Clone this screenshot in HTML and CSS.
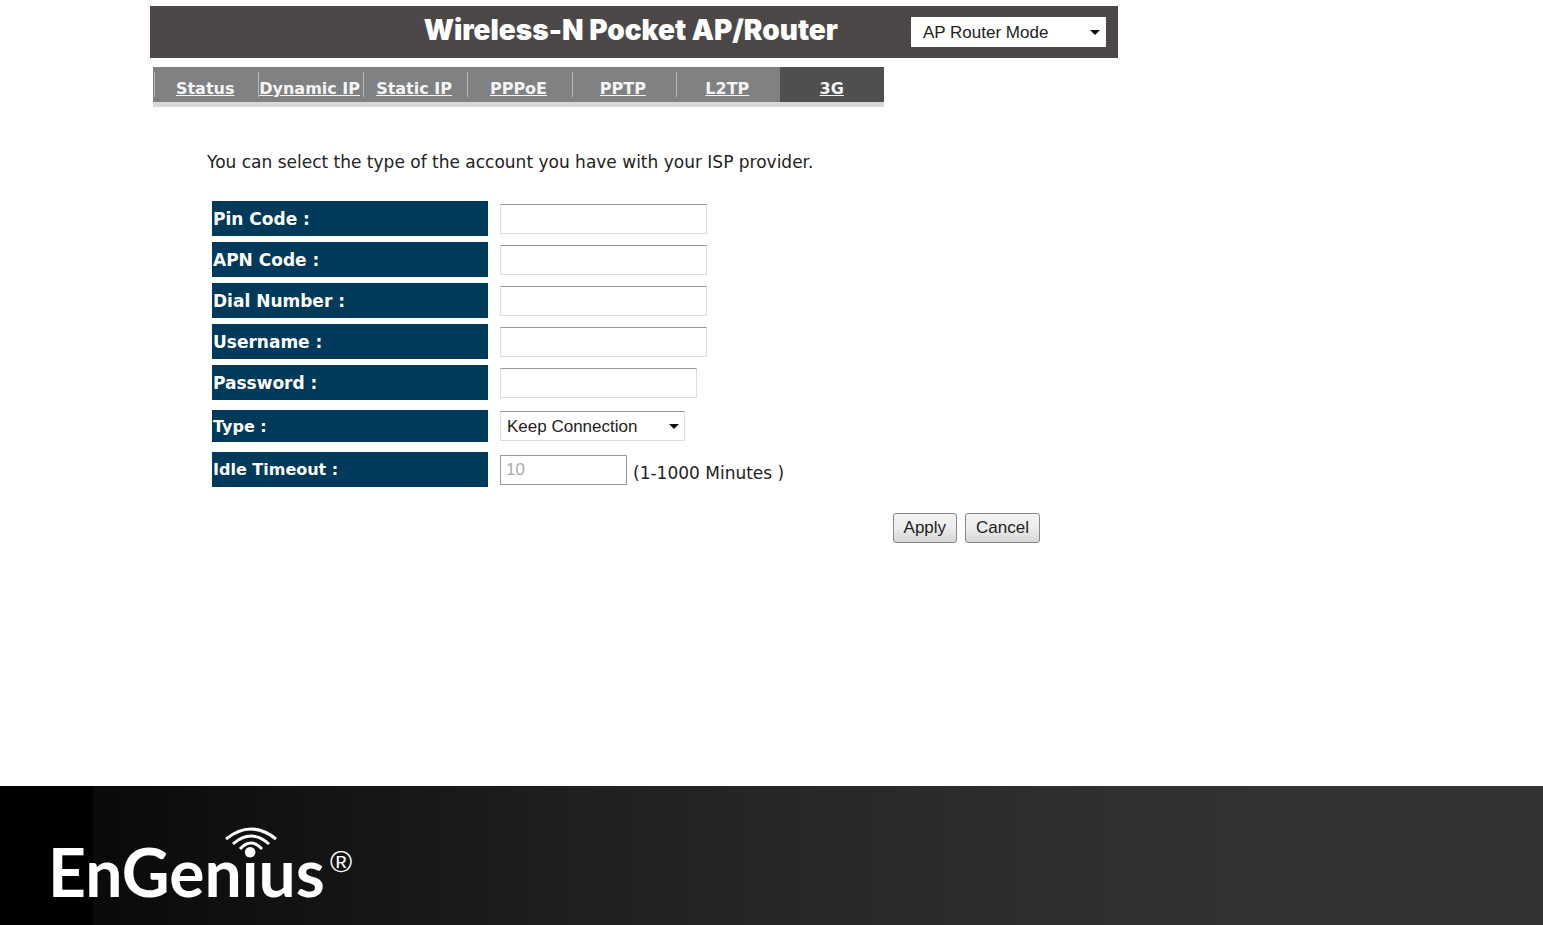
FILE: index.html
```
<!DOCTYPE html>
<html lang="en">

<head>
    <meta charset="UTF-8">
    <meta name="viewport" content="width=device-width, initial-scale=1.0">
    <title>Wireless-N Pocket AP/Router</title>
    <link rel="stylesheet" href="styles.css">
</head>

<body>
    <div class="container">
        <header class="header">
            <h1>Wireless-N Pocket AP/Router</h1>
            <div class="select mode">
                <select id="mode" aria-label="Operation mode">
                    <option>AP Router Mode</option>
                </select>
            </div>
        </header>

        <nav class="tabs">
            <a href="#status">Status</a>
            <a href="#dynamic">Dynamic IP</a>
            <a href="#static">Static IP</a>
            <a href="#pppoe">PPPoE</a>
            <a href="#pptp">PPTP</a>
            <a href="#l2tp">L2TP</a>
            <a href="#3g" class="active">3G</a>
        </nav>

        <form class="wan-form">
            <p>You can select the type of the account you have with your ISP provider.</p>

            <div class="row">
                <label for="pin">Pin Code :</label>
                <input type="text" id="pin">
            </div>
            <div class="row">
                <label for="apn">APN Code :</label>
                <input type="text" id="apn">
            </div>
            <div class="row">
                <label for="dial">Dial Number :</label>
                <input type="text" id="dial">
            </div>
            <div class="row">
                <label for="username">Username :</label>
                <input type="text" id="username">
            </div>
            <div class="row">
                <label for="password">Password :</label>
                <input type="password" id="password">
            </div>
            <div class="row spaced short">
                <label for="type">Type :</label>
                <div class="select type">
                    <select id="type">
                        <option>Keep Connection</option>
                    </select>
                </div>
            </div>
            <div class="row spaced">
                <label for="idle">Idle Timeout :</label>
                <input type="text" id="idle" class="idle" value="10" disabled>
                <span class="hint">(1-1000 Minutes )</span>
            </div>

            <div class="buttons">
                <button type="submit">Apply</button>
                <button type="reset">Cancel</button>
            </div>
        </form>
    </div>

    <footer class="footer">
        <svg class="logo" width="320" height="92" viewBox="0 0 320 92" role="img" aria-label="EnGenius">
            <text class="logo-name" x="0" y="70">EnGenius</text>
            <!-- wifi waves above the i -->
            <g fill="none" stroke="#fff" stroke-width="3">
                <path d="M178 12 Q203 -8 228 12" />
                <path d="M185 17 Q203 1 221 17" />
                <path d="M192 22 Q203 10 214 22" />
            </g>
            <text class="logo-mark" x="282" y="45">®</text>
        </svg>
    </footer>
</body>

</html>
```
FILE: styles.css
```
* {
    box-sizing: border-box;
}

body {
    font-family: "DejaVu Sans", Verdana, sans-serif;
    font-size: 17px;
    margin: 0;
    min-height: 100vh;
    display: flex;
    flex-direction: column;
    background-color: #fff;
    color: #222;
}

.container {
    width: 100%;
    max-width: 1118px;
    padding: 6px 0 40px 150px;
    flex: 1;
}

.header {
    display: flex;
    align-items: center;
    justify-content: flex-end;
    gap: 73px;
    height: 52px;
    padding-right: 12px;
    background-color: #4c4848;
}

.header h1 {
    margin: 0 0 4px;
    font-family: Inter, "Arial Black", sans-serif;
    font-size: 28px;
    font-weight: 900;
    color: #fff;
}

.tabs {
    display: flex;
    width: 731px;
    max-width: 100%;
    margin: 9px 0 0 3px;
    border-bottom: 5px solid #d8dada;
}

.tabs a {
    position: relative;
    flex: 1 1 0;
    height: 35px;
    padding-top: 7px;
    line-height: 30px;
    text-align: center;
    white-space: nowrap;
    font-size: 16px;
    font-weight: bold;
    color: #f4f4f4;
    background-color: #7f8183;
}

.tabs a::before {
    content: "";
    position: absolute;
    left: 1px;
    top: 5px;
    height: 25px;
    border-left: 1px solid #b4b6b8;
}

.tabs .active {
    background-color: #4f4f50;
}

.tabs .active::before {
    display: none;
}

.wan-form {
    padding: 44px 78px 0 62px;
}

.wan-form p {
    margin: 0 0 28px -5px;
    line-height: 22px;
}

.row {
    display: flex;
    align-items: center;
    height: 35px;
    margin-bottom: 6px;
}

.row label {
    display: flex;
    align-items: center;
    width: 276px;
    height: 100%;
    margin-right: 12px;
    padding-left: 1px;
    background-color: #003a5a;
    color: #fff;
    font-weight: bold;
}

.spaced {
    margin-top: 10px;
}

.spaced label {
    font-size: 16px;
}

.short {
    height: 32px;
}

input,
select,
button {
    font-family: "Liberation Sans", Arial, sans-serif;
    font-size: 17px;
    color: #222;
}

input {
    width: 207px;
    height: 30px;
    padding: 0 5px;
    border: 1px solid #ddd;
    border-top-color: #999;
    background-color: #fff;
}

input[type="password"] {
    width: 197px;
}

.row .idle {
    width: 127px;
    border-color: #999;
    color: #aaa;
}

.hint {
    padding: 6px 0 0 6px;
}

.select {
    position: relative;
    height: 30px;
}

.select select {
    width: 100%;
    height: 100%;
    appearance: none;
    padding: 0 6px;
    border: 1px solid #ddd;
    border-top-color: #999;
    background-color: #fff;
}

.select::after {
    content: "";
    position: absolute;
    right: 6px;
    top: 13px;
    border: 5px solid transparent;
    border-top-color: #111;
    border-bottom: 0;
    pointer-events: none;
}

.mode {
    width: 195px;
}

.mode select {
    padding-left: 11px;
    border-color: #fff;
}

.type {
    width: 185px;
}

.buttons {
    display: flex;
    justify-content: flex-end;
    gap: 8px;
    margin-top: 26px;
}

button {
    height: 30px;
    padding: 0 10px;
    border: 1px solid #888;
    border-radius: 3px;
    background: linear-gradient(#f4f4f4, #ececec 50%, #d6d6d6);
}

.footer {
    height: 139px;
    padding: 41px 0 0 48px;
    background: linear-gradient(to right, #000 0, #000 6%, #0a0a0a 6%, #151515 23%, #1f1f1f 37%, #272727 52%, #2e2e2e 68%, #323232 82%, #333 100%);
}

.logo {
    display: block;
    overflow: visible;
    fill: #fff;
}

.logo-name {
    font-family: Lato, sans-serif;
    font-size: 66px;
    font-weight: bold;
}

.logo-mark {
    font-family: "Liberation Sans", Arial, sans-serif;
    font-size: 30px;
}
```
